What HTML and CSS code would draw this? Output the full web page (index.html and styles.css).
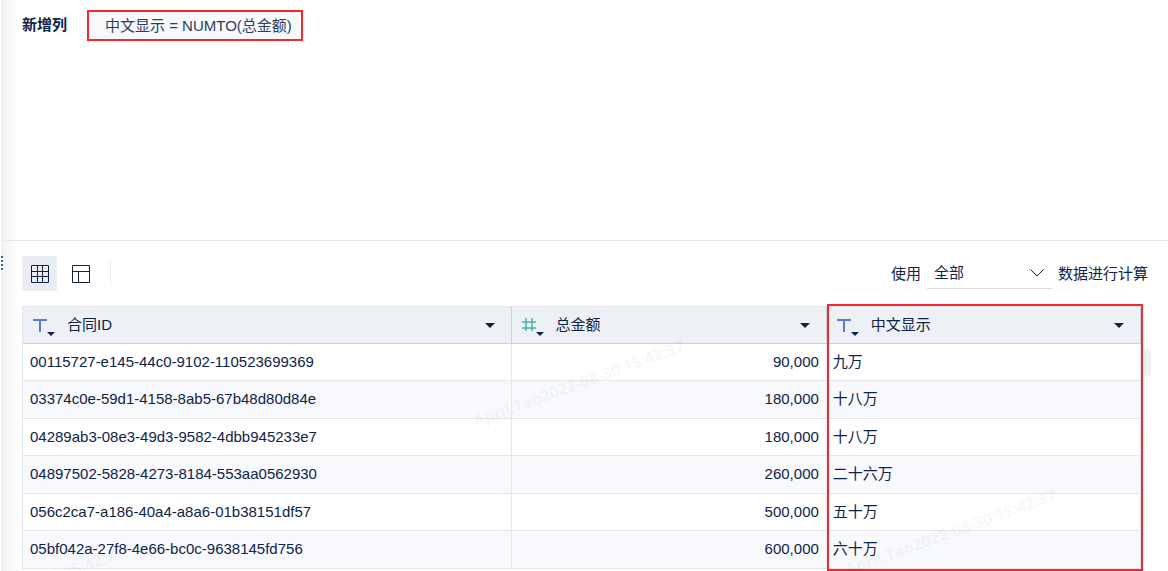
FILE: index.html
```html
<!DOCTYPE html>
<html lang="zh-CN">
<head>
    <meta charset="UTF-8">
    <meta name="viewport" content="width=device-width, initial-scale=1.0">
    <title>新增列</title>
    <link rel="stylesheet" href="styles.css">
</head>
<body>
    <div class="edge"><span class="handle"></span></div>
    <main class="main">
        <section class="formula">
            <h1 class="formula-title">新增列</h1>
            <button class="formula-item" type="button">中文显示 = NUMTO(总金额)</button>
        </section>
        <section class="preview">
            <div class="toolbar">
                <div class="views">
                    <button class="view active" type="button" aria-label="表格">
                        <svg width="18" height="18" viewBox="0 0 18 18"><path d="M.5.5h17v17H.5zM6.500.5v17M11.500.5v17M.5 6.500h17M.5 11.500h17"/></svg>
                    </button>
                    <button class="view" type="button" aria-label="布局">
                        <svg width="18" height="18" viewBox="0 0 18 18"><path d="M.5.5h17v17H.5zM.5 6.500h17M6.500 6.500v11"/></svg>
                    </button>
                </div>
                <div class="range">
                    <label for="range">使用</label>
                    <span class="select">
                        <select id="range">
                            <option selected>全部</option>
                        </select>
                        <svg width="14" height="8" viewBox="0 0 14 8"><path d="M.5.5 7 7l6.500-6.500"/></svg>
                    </span>
                    <label for="range">数据进行计算</label>
                </div>
            </div>
            <div class="grid">
                <table class="table">
                    <colgroup>
                        <col class="col-id">
                        <col class="col-amount">
                        <col class="col-text">
                    </colgroup>
                    <thead>
                        <tr>
                            <th>
                                <div class="head">
                                    <button class="type text" type="button" aria-label="文本类型">
                                        <svg width="24" height="20" viewBox="0 0 24 20"><path class="mark" d="M1 3h14M8 3v12"/><path class="arrow" d="M15 15h8l-4 4z"/></svg>
                                    </button>
                                    <span class="name">合同ID</span>
                                    <button class="menu" type="button" aria-label="菜单"></button>
                                </div>
                            </th>
                            <th>
                                <div class="head">
                                    <button class="type number" type="button" aria-label="数值类型">
                                        <svg width="24" height="20" viewBox="0 0 24 20"><path class="mark" d="M1 5h14M1 11h14M5 1v13M11 1v13"/><path class="arrow" d="M15 15h8l-4 4z"/></svg>
                                    </button>
                                    <span class="name">总金额</span>
                                    <button class="menu" type="button" aria-label="菜单"></button>
                                </div>
                            </th>
                            <th>
                                <div class="head">
                                    <button class="type text" type="button" aria-label="文本类型">
                                        <svg width="24" height="20" viewBox="0 0 24 20"><path class="mark" d="M1 3h14M8 3v12"/><path class="arrow" d="M15 15h8l-4 4z"/></svg>
                                    </button>
                                    <span class="name">中文显示</span>
                                    <button class="menu" type="button" aria-label="菜单"></button>
                                </div>
                            </th>
                        </tr>
                    </thead>
                    <tbody>
                        <tr><td>00115727-e145-44c0-9102-110523699369</td><td class="num">90,000</td><td>九万</td></tr>
                        <tr><td>03374c0e-59d1-4158-8ab5-67b48d80d84e</td><td class="num">180,000</td><td>十八万</td></tr>
                        <tr><td>04289ab3-08e3-49d3-9582-4dbb945233e7</td><td class="num">180,000</td><td>十八万</td></tr>
                        <tr><td>04897502-5828-4273-8184-553aa0562930</td><td class="num">260,000</td><td>二十六万</td></tr>
                        <tr><td>056c2ca7-a186-40a4-a8a6-01b38151df57</td><td class="num">500,000</td><td>五十万</td></tr>
                        <tr><td>05bf042a-27f8-4e66-bc0c-9638145fd756</td><td class="num">600,000</td><td>六十万</td></tr>
                    </tbody>
                </table>
                <div class="scroll"></div>
                <div class="highlight"></div>
            </div>
        </section>
    </main>
    <div class="watermark mark-a">April.Tao2022-08-30 15:42:37</div>
    <div class="watermark mark-b">April.Tao2022-08-30 15:42:37</div>
    <div class="watermark mark-c">April.Tao2022-08-30 15:42:37</div>
</body>
</html>
```
FILE: styles.css
```css
*{
    box-sizing: border-box;
}
body{
    position: relative;
    display: flex;
    height: 100vh;
    margin: 0;
    overflow: hidden;
    background-color: #fff;
    color: #0f2347;
    font: 15px/20px "Liberation Sans", "Noto Sans CJK SC", sans-serif;
}
button, select{
    margin: 0;
    padding: 0;
    border: 0;
    background: none;
    color: inherit;
    font: inherit;
    cursor: pointer;
}
svg{
    display: block;
    fill: none;
    stroke: #0f2347;
}
.edge{
    flex: none;
    width: 22px;
    background: linear-gradient(90deg, #fff 1px, #f0f1f4 1px, #fff 18px);
}
/* drag handle of the side panel */
.handle{
    position: absolute;
    top: 256px;
    left: 1px;
    width: 2px;
    height: 16px;
    background: repeating-linear-gradient(#3f5f91 0 2px, #fff 2px 4px);
}
.main{
    display: flex;
    flex: 1;
    flex-direction: column;
    min-width: 0;
}
.formula{
    display: flex;
    flex: none;
    align-items: flex-start;
    gap: 20px;
    height: 241px;
    padding-top: 10px;
    margin-left: -20px;
    padding-left: 20px;
    border-bottom: 1px solid #e6e8f0;
}
.formula-title{
    margin: 0;
    font-size: 15px;
    line-height: 30px;
}
.formula-item{
    height: 31px;
    padding: 0 9px 0 16px;
    border: 2px solid #f5282d;
    background-color: #f7f9fd;
    color: #2c3e5e;
}
.preview{
    display: flex;
    flex: 1;
    flex-direction: column;
    min-height: 0;
    padding: 15px 17px 0 0;
}
.toolbar{
    display: flex;
    flex: none;
    align-items: center;
    justify-content: space-between;
    height: 35px;
    margin-bottom: 15px;
}
.views{
    display: flex;
    gap: 6px;
}
.view{
    display: flex;
    align-items: center;
    justify-content: center;
    width: 35px;
    height: 35px;
    border-radius: 2px;
}
.view.active{
    background-color: #ecedf2;
}
.views::after{
    content: "";
    align-self: center;
    width: 1px;
    height: 25px;
    margin-left: 6px;
    background-color: #eeeff3;
}
.range{
    display: flex;
    align-items: center;
    gap: 6px;
    margin-right: 3px;
}
.select{
    display: flex;
    align-items: center;
    width: 125px;
    height: 31px;
    padding-right: 8px;
    border-bottom: 1px solid #d5d9e4;
}
.select select{
    flex: 1;
    height: 30px;
    margin-right: -14px;
    padding: 0 7px;
    appearance: none;
}
.select svg{
    pointer-events: none;
}
.grid{
    position: relative;
    display: flex;
    flex: 1;
    min-height: 0;
    align-items: flex-start;
    gap: 3px;
}
.table{
    flex: 1;
    table-layout: fixed;
    border-collapse: separate;
    border-spacing: 0;
    border-left: 1px solid #e3e6ed;
}
.col-id{
    width: 43.700%;
}
.col-amount{
    width: 28.200%;
}
th{
    height: 38px;
    padding: 0;
    border-top: 1px solid #e3e6ed;
    border-right: 1px solid #cdd1da;
    border-bottom: 1px solid #cdd1da;
    background-color: #edf0f5;
    font-weight: normal;
    text-align: left;
}
.head{
    display: flex;
    align-items: center;
    padding: 0 16px 0 9px;
}
.type{
    padding-top: 4px;
    margin-right: 11px;
}
.text .mark{
    stroke: #5b76df;
    stroke-width: 2;
}
.number .mark{
    stroke: #46b5a6;
    stroke-width: 1.500;
}
.arrow{
    fill: #0f2347;
    stroke: none;
}
.name{
    flex: 1;
}
.menu{
    border: solid transparent;
    border-width: 5px 5px 0;
    border-top-color: #0f2347;
}
td{
    height: 37px;
    padding: 0 7px;
    border-right: 1px solid #e3e6ed;
    border-bottom: 1px solid #e3e6ed;
}
td:last-child{
    padding-left: 6px;
}
tbody tr:nth-child(even) td{
    height: 38px;
    padding-bottom: 1px;
    background-color: #f7f9fd;
}
.num{
    text-align: right;
}
.scroll{
    flex: none;
    width: 7px;
    height: 27px;
    margin-top: 43px;
    border-radius: 3px;
    background-color: #eff0f2;
}
/* red frame over the last column */
.highlight{
    position: absolute;
    top: -2px;
    right: 8px;
    bottom: 0;
    width: 316px;
    border: 2px solid #f5282d;
    pointer-events: none;
}
.watermark{
    position: absolute;
    color: rgba(0, 0, 0, 0.05);
    font: bold 16px/20px "Open Sans", sans-serif;
    white-space: nowrap;
    transform: rotate(-20deg);
    pointer-events: none;
}
.mark-a{
    top: 373px;
    left: 467px;
}
.mark-b{
    top: 522px;
    left: 839px;
}
.mark-c{
    top: 579px;
    left: -93px;
}
```
